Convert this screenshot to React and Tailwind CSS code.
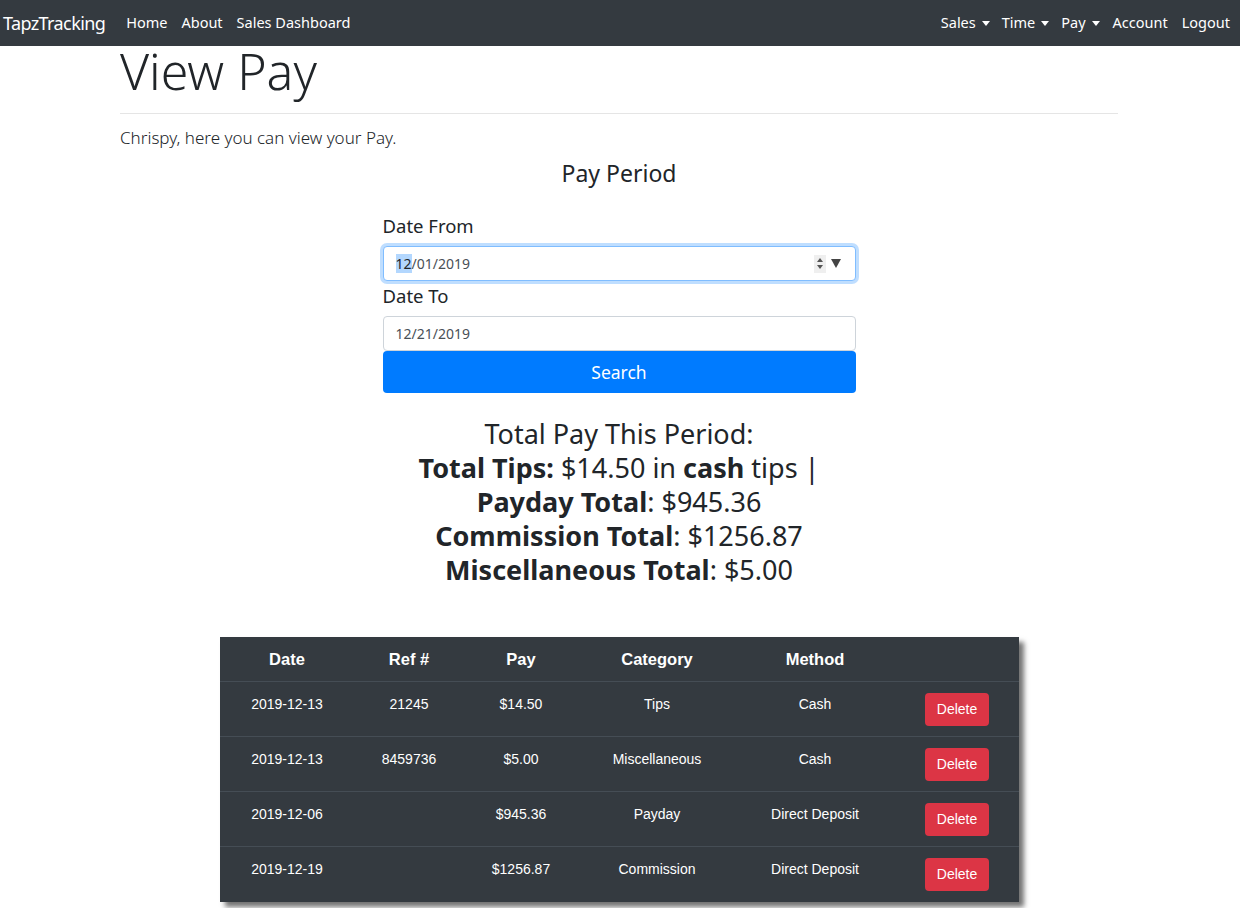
import React from 'react';

const rows = [
  { date: '2019-12-13', ref: '21245', pay: '$14.50', cat: 'Tips', method: 'Cash' },
  { date: '2019-12-13', ref: '8459736', pay: '$5.00', cat: 'Miscellaneous', method: 'Cash' },
  { date: '2019-12-06', ref: '', pay: '$945.36', cat: 'Payday', method: 'Direct Deposit' },
  { date: '2019-12-19', ref: '', pay: '$1256.87', cat: 'Commission', method: 'Direct Deposit' },
];

const cols = ['w-[134px]', 'w-[110px]', 'w-[114px]', 'w-[158px]', 'w-[158px]', 'w-[125px]'];

function Caret() {
  return <span className="ml-[6px] inline-block align-middle border-x-[4.5px] border-x-transparent border-t-[5px] border-t-white" />;
}

function Navbar() {
  return (
    <nav className="h-[46px] bg-[#343a40] flex items-center pl-[3px] pr-[3px]">
      <span className="text-white text-[18px] tracking-[-0.6px] mr-[14px] leading-none">TapzTracking</span>
      <div className="flex items-center text-[14.5px] text-white">
        <a className="px-[7px]">Home</a>
        <a className="px-[7px]">About</a>
        <a className="px-[7px]">Sales Dashboard</a>
      </div>
      <div className="ml-auto flex items-center text-[14.5px] text-white">
        <a className="px-[6px] flex items-center">Sales<Caret /></a>
        <a className="px-[6px] flex items-center">Time<Caret /></a>
        <a className="px-[6px] flex items-center">Pay<Caret /></a>
        <a className="px-[7px]">Account</a>
        <a className="px-[7px]">Logout</a>
      </div>
    </nav>
  );
}

function Field({ label, children, focused }) {
  return (
    <div>
      <div className="text-[18.5px] leading-[26px] mb-[7px] text-[#212529]">{label}</div>
      <div
        className={`h-[35px] rounded-[4px] bg-white flex items-center pl-[12px] pr-[14px] text-[14px] text-[#495057] ${
          focused ? 'border border-[#80bdff] shadow-[0_0_0_3px_rgba(0,123,255,0.25)]' : 'border border-[#ced4da]'
        }`}
      >
        {children}
      </div>
    </div>
  );
}

export default function App() {
  return (
    <div className="min-h-[908px] bg-white font-['Noto_Sans',sans-serif] text-[#212529]">
      <Navbar />
      <div className="mx-[120px] w-[998px]">
        <h1 className="text-[50px] font-light leading-[56px] -mt-[3px]">View Pay</h1>
        <hr className="border-t border-[#e5e5e5] mt-[14px]" />
        <p className="text-[17px] font-light mt-[12px] leading-[24px]">Chrispy, here you can view your Pay.</p>
        <h2 className="text-center text-[23px] leading-[30px] mt-[8px]">Pay Period</h2>

        <div className="w-[473px] mx-auto mt-[25px]">
          <Field label="Date From" focused>
            <span>
              <span className="bg-[#b3d7fe] text-[#212529]">12</span>/01/2019
            </span>
            <span className="ml-auto flex items-center gap-[5px] text-[#555]">
              <span className="w-[12px] h-[18px] bg-[#efefef] flex flex-col items-center justify-center gap-[3px]">
                <span className="border-x-[3px] border-x-transparent border-b-[4px] border-b-[#555]" />
                <span className="border-x-[3px] border-x-transparent border-t-[4px] border-t-[#555]" />
              </span>
              <span className="border-x-[5px] border-x-transparent border-t-[9px] border-t-[#444]" />
            </span>
          </Field>
          <div className="mt-[2px]">
            <Field label="Date To">
              <span>12/21/2019</span>
            </Field>
          </div>
          <button className="w-full h-[42px] bg-[#007bff] text-white text-[17.5px] rounded-[4px]">Search</button>
        </div>

        <div className="text-center text-[27px] leading-[34px] mt-[24px]">
          <div>Total Pay This Period:</div>
          <div><b>Total Tips:</b> $14.50 in <b>cash</b> tips |</div>
          <div><b>Payday Total</b>: $945.36</div>
          <div><b>Commission Total</b>: $1256.87</div>
          <div><b>Miscellaneous Total</b>: $5.00</div>
        </div>
      </div>

      <div className="ml-[220px] mt-[50px] w-[799px] bg-[#343a40] text-white shadow-[5px_5px_5px_rgba(0,0,0,0.55)] font-['Liberation_Sans',sans-serif]">
        <div className="flex h-[45px] items-center pt-[1px] text-[16.5px] font-bold border-b border-[#454d55]">
          {['Date', 'Ref #', 'Pay', 'Category', 'Method', ''].map((h, i) => (
            <div key={i} className={`${cols[i]} text-center`}>{h}</div>
          ))}
        </div>
        {rows.map((r, idx) => (
          <div key={idx} className={`flex h-[55px] text-[14px] ${idx < rows.length - 1 ? 'border-b border-[#454d55]' : ''}`}>
            {[r.date, r.ref, r.pay, r.cat, r.method].map((c, i) => (
              <div key={i} className={`${cols[i]} text-center pt-[12px]`}>{c}</div>
            ))}
            <div className={`${cols[5]} flex justify-center pt-[11px] pl-[1px]`}>
              <button className="h-[33px] w-[64px] rounded-[4px] bg-[#dc3545] text-white text-[14px]">Delete</button>
            </div>
          </div>
        ))}
      </div>
    </div>
  );
}
